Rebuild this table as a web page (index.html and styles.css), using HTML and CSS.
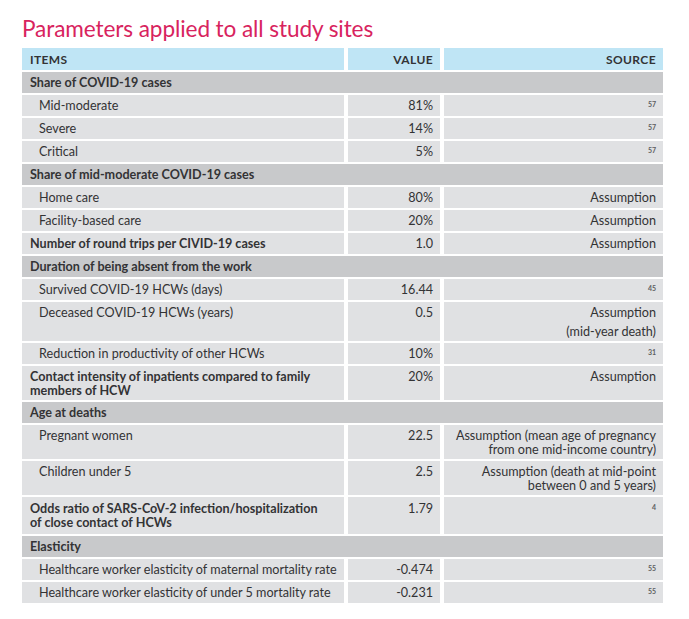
FILE: index.html
```html
<!DOCTYPE html>
<html lang="en">
<head>
<meta charset="utf-8">
<title>Parameters applied to all study sites</title>
<link rel="stylesheet" href="styles.css">
</head>
<body>
<div class="page">
  <h1 class="title">Parameters applied to all study sites</h1>
  <div class="grid">
    <div class="hd">ITEMS</div>
    <div class="hd num">VALUE</div>
    <div class="hd num">SOURCE</div>

    <div class="grp">Share of COVID-19 cases</div>
    <div class="c sub">Mid-moderate</div><div class="c num">81%</div><div class="c num"><span class="ref">57</span></div>
    <div class="c sub">Severe</div><div class="c num">14%</div><div class="c num"><span class="ref">57</span></div>
    <div class="c sub">Critical</div><div class="c num">5%</div><div class="c num"><span class="ref">57</span></div>

    <div class="grp">Share of mid-moderate COVID-19 cases</div>
    <div class="c sub">Home care</div><div class="c num">80%</div><div class="c num">Assumption</div>
    <div class="c sub">Facility-based care</div><div class="c num">20%</div><div class="c num">Assumption</div>
    <div class="c bold">Number of round trips per CIVID-19 cases</div><div class="c num">1.0</div><div class="c num">Assumption</div>

    <div class="grp">Duration of being absent from the work</div>
    <div class="c sub">Survived COVID-19 HCWs (days)</div><div class="c num">16.44</div><div class="c num"><span class="ref">45</span></div>
    <div class="c sub">Deceased COVID-19 HCWs (years)</div><div class="c num">0.5</div><div class="c num">Assumption<span class="line2">(mid-year death)</span></div>
    <div class="c sub">Reduction in productivity of other HCWs</div><div class="c num">10%</div><div class="c num"><span class="ref">31</span></div>
    <div class="c bold">Contact intensity of inpatients compared to family<br>members of HCW</div><div class="c num">20%</div><div class="c num">Assumption</div>

    <div class="grp">Age at deaths</div>
    <div class="c sub">Pregnant women</div><div class="c num">22.5</div><div class="c num">Assumption (mean age of pregnancy<br>from one mid-income country)</div>
    <div class="c sub">Children under 5</div><div class="c num">2.5</div><div class="c num">Assumption (death at mid-point<br>between 0 and 5 years)</div>
    <div class="c bold tall">Odds ratio of SARS-CoV-2 infection/hospitalization<br>of close contact of HCWs</div><div class="c num tall">1.79</div><div class="c num tall"><span class="ref">4</span></div>

    <div class="grp">Elasticity</div>
    <div class="c sub">Healthcare worker elasticity of maternal mortality rate</div><div class="c num">-0.474</div><div class="c num"><span class="ref">55</span></div>
    <div class="c sub">Healthcare worker elasticity of under 5 mortality rate</div><div class="c num">-0.231</div><div class="c num"><span class="ref">55</span></div>
  </div>
</div>
</body>
</html>
```
FILE: styles.css
```css
* { box-sizing: border-box; }
html, body { margin: 0; padding: 0; background: #ffffff; }
body {
  font-family: "Lato", "Open Sans", sans-serif;
  color: #333335;
}
.page {
  padding: 17px 0 0 22px;
  width: 689px;
}
.title {
  margin: 0 0 7px 0;
  font-weight: 400;
  font-size: 22.6px;
  line-height: 24px;
  color: #d8235e;
  letter-spacing: -0.1px;
}
.grid {
  display: grid;
  grid-template-columns: 322px 92px 219px;
  column-gap: 4px;
  row-gap: 2px;
  width: 641px;
  font-size: 12.6px;
  line-height: 14px;
}
.hd {
  background: #bfe5f5;
  font-weight: 700;
  font-size: 12px;
  color: #333335;
  padding: 5px 8px 3px 8px;
  height: 22px;
  letter-spacing: 0.4px;
}
.grp {
  grid-column: 1 / -1;
  background: #c8c9cb;
  font-weight: 700;
  color: #333335;
  padding: 4px 8px 2px 8px;
  min-height: 21px;
}
.c {
  background: #e0e1e3;
  padding: 4px 7px 2px 8px;
  min-height: 21px;
  white-space: nowrap;
}
.sub { padding-left: 17px; }
.bold { font-weight: 700; color: #333335; }
.num { text-align: right; padding-right: 7px; }
.tall { padding-top: 5px; padding-bottom: 4px; }
.ref {
  display: block;
  font-size: 7px;
  line-height: 9px;
  color: #5e5e60;
  font-weight: 700;
  padding-top: 1px;
}
.line2 {
  display: block;
  margin-top: 5px;
}
```
